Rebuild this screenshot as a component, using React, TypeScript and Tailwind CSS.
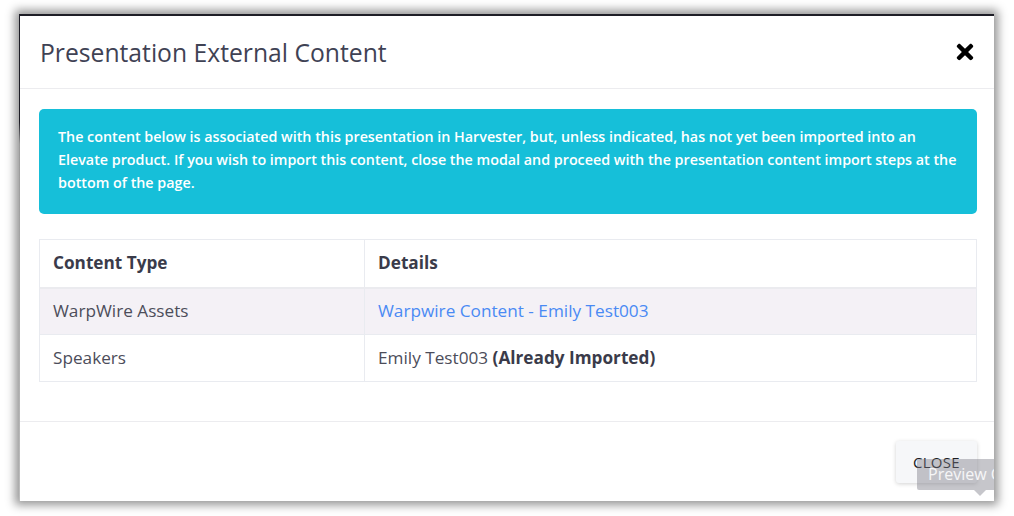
import React from 'react';
import { FaTimes } from 'react-icons/fa';

const rows = [
  { type: 'WarpWire Assets', link: 'Warpwire Content - Emily Test003' },
  { type: 'Speakers', name: 'Emily Test003', note: '(Already Imported)' },
];

export default function App() {
  return (
    <div className="w-[1014px] h-[516px] bg-white pt-[14px] pl-[19px] font-['Open_Sans',sans-serif]">
      {/* modal frame, the dark top/left edge is the page behind it */}
      <div className="w-[975px] h-[487px] pt-[2px] pl-[1px] bg-[linear-gradient(to_bottom,#1d1d26_0px,#1d1d26_108px,#9a9a9a_130px,#bdbdbd_100%)] shadow-[0_0_9px_4px_rgba(0,0,0,0.42)]">
        <div className="relative h-full bg-white flex flex-col overflow-hidden">
          <div className="h-[73px] flex items-center justify-between pl-[20px] pr-[17px] border-b border-[#ececef]">
            <h1 className="text-[24.7px] text-[#3f4254] leading-none pt-[2px]">Presentation External Content</h1>
            <FaTimes size={24} className="text-black" />
          </div>

          <div className="pl-[19px] pr-[17px] pt-[20px] pb-[39px] border-b border-[#ececef]">
            <div className="bg-[#16bfd9] rounded-[5px] pl-[19px] pr-[17px] pt-[16px] pb-[20px] text-white text-[14.3px] font-semibold leading-[23px]">
              The content below is associated with this presentation in Harvester, but, unless indicated, has not yet been imported into an Elevate product. If you wish to import this content, close the modal and proceed with the presentation content import steps at the bottom of the page.
            </div>

            <table className="mt-[25px] w-full border border-[#e9ebf0] border-collapse text-[17.2px] text-[#4c4d5a]">
              <thead>
                <tr className="h-[48px] border-b-2 border-[#ebebef]">
                  <th className="w-[325px] text-left font-bold text-[#3a3b4a] pl-[13px] border-r border-[#e9ebf0]">Content Type</th>
                  <th className="text-left font-bold text-[#3a3b4a] pl-[13px]">Details</th>
                </tr>
              </thead>
              <tbody>
                {rows.map((r, i) => (
                  <tr key={i} className={`h-[47px] border-b border-[#e9ebf0] ${i === 0 ? 'bg-[#f4f1f6]' : 'bg-white'}`}>
                    <td className="pl-[13px] border-r border-[#e9ebf0]">{r.type}</td>
                    <td className="pl-[13px]">
                      {r.link ? (
                        <a className="text-[#4a8af4]">{r.link}</a>
                      ) : (
                        <span>
                          {r.name} <b className="font-bold text-[#3a3b4a]">{r.note}</b>
                        </span>
                      )}
                    </td>
                  </tr>
                ))}
              </tbody>
            </table>
          </div>

          <div className="flex justify-end pt-[19px] pr-[17px]">
            <button className="w-[81px] h-[42px] bg-[#f6f7f9] rounded-[3px] shadow-[0_1px_4px_rgba(0,0,0,0.18)] text-[15px] font-medium text-[#1c1c22] tracking-[0.3px]">
              CLOSE
            </button>
          </div>

          {/* tooltip from page behind */}
          <div className="absolute left-[897px] top-[443px] w-[90px] h-[31px] bg-[rgba(120,120,132,0.42)] rounded-[2px] pl-[11px] text-[16px] leading-[31px] text-white/85 whitespace-nowrap">
            Preview Content
            <div className="absolute left-[57px] top-[31px] w-0 h-0 border-l-[6px] border-r-[6px] border-t-[6px] border-l-transparent border-r-transparent border-t-[rgba(120,120,132,0.42)]" />
          </div>
        </div>
      </div>
    </div>
  );
}
